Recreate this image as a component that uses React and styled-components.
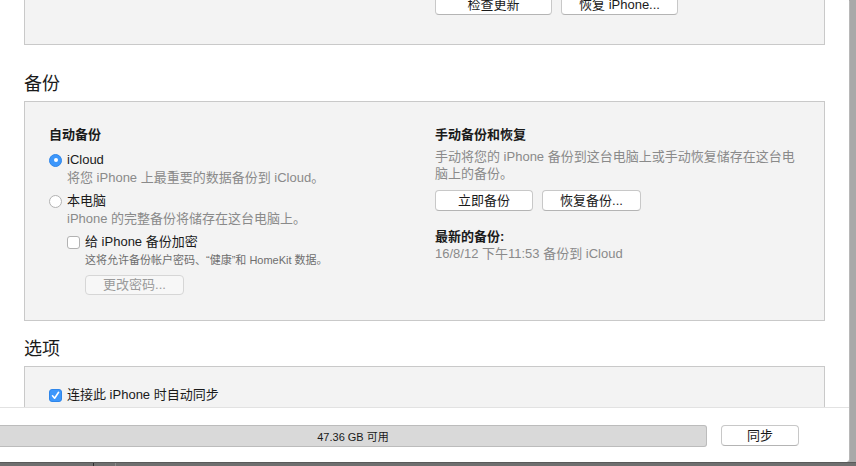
import React from 'react'
import styled, { createGlobalStyle } from 'styled-components'

const Global = createGlobalStyle`
  html, body { margin: 0; padding: 0; }
  body {
    width: 856px;
    height: 466px;
    overflow: hidden;
    background: linear-gradient(90deg, #c4c4c4 0px, #a9a9a9 7px);
    font-family: "Liberation Sans", "Noto Sans CJK SC", sans-serif;
    color: #1d1d1d;
    -webkit-font-smoothing: antialiased;
  }
`

export default function App() {
  return (
    <Page>
      <Global />
      <Window>
        <Scroll>
          <Inner>
            <Panel $top>
              <span />
              <ButtonRow>
                <Button $w={117}>检查更新</Button>
                <Button $w={117}>恢复 iPhone...</Button>
              </ButtonRow>
            </Panel>

            <Heading $gap={28}>备份</Heading>
            <Panel>
              <Column>
                <Title>自动备份</Title>
                <OptionRow $mt={8}>
                  <Radio $on />
                  <Label>iCloud</Label>
                </OptionRow>
                <Desc>将您 iPhone 上最重要的数据备份到 iCloud。</Desc>
                <OptionRow $mt={6}>
                  <Radio />
                  <Label>本电脑</Label>
                </OptionRow>
                <Desc>iPhone 的完整备份将储存在这台电脑上。</Desc>
                <Nested>
                  <OptionRow $mt={6}>
                    <Check />
                    <Label>给 iPhone 备份加密</Label>
                  </OptionRow>
                  <Small>这将允许备份帐户密码、“健康”和 HomeKit 数据。</Small>
                  <Button $w={99} $h={20} $ml={18} $mt={7} disabled>更改密码...</Button>
                </Nested>
              </Column>
              <Column>
                <Title>手动备份和恢复</Title>
                <Desc $mt={5}>手动将您的 iPhone 备份到这台电脑上或手动恢复储存在这台电脑上的备份。</Desc>
                <ButtonRow $mt={8}>
                  <Button $w={98}>立即备份</Button>
                  <Button $w={99}>恢复备份...</Button>
                </ButtonRow>
                <Title $mt={17}>最新的备份:</Title>
                <Desc>16/8/12 下午11:53 备份到 iCloud</Desc>
              </Column>
            </Panel>

            <Heading $gap={17}>选项</Heading>
            <Panel $open>
              <OptionRow>
                <Check $on>
                  <svg width="9" height="9" viewBox="0 0 9 9">
                    <path d="M1.5 4.8 L3.6 7.2 L7.6 1.3" fill="none" stroke="#fff" strokeWidth="1.6" strokeLinecap="round" strokeLinejoin="round" />
                  </svg>
                </Check>
                <Label>连接此 iPhone 时自动同步</Label>
              </OptionRow>
            </Panel>
          </Inner>
        </Scroll>
        <Footer>
          <Storage>47.36 GB 可用</Storage>
          <Button $w={78}>同步</Button>
        </Footer>
      </Window>
      <Strip>
        <Divider $at={93} $c="#2e2e2e" />
        <Divider $at={21} $c="#8c8c8c" />
      </Strip>
    </Page>
  )
}

const Page = styled.div`
  display: flex;
  flex-direction: column;
  width: 856px;
  height: 466px;
`

const Window = styled.div`
  width: 849px;
  height: 462px;
  background: #fff;
  display: flex;
  flex-direction: column;
  box-shadow: 1px 1px 0 #b8b8b8;
  border-bottom-right-radius: 4px;
  overflow: hidden;
`

const Scroll = styled.div`
  flex: 1;
  overflow: hidden;
`

const Inner = styled.div`
  margin-top: -40px;
  padding: 0 24px 0 24px;
  width: 801px;
`

const Panel = styled.div`
  box-sizing: border-box;
  background: #f3f3f3;
  border: 1px solid #c9c9c9;
  display: grid;
  grid-template-columns: 386px 1fr;
  padding: ${p => (p.$top ? '0 24px 29px' : p.$open ? '19px 24px 40px' : '24px 24px 25px')};
  ${p => p.$top && 'height: 85px; align-items: end;'}
  ${p => p.$open && 'display: block;'}
`

const Heading = styled.h2`
  margin: ${p => p.$gap}px 0 10px;
  font-family: "Noto Sans CJK SC", sans-serif;
  font-weight: 400;
  font-size: 18px;
  line-height: 18px;
  color: #1a1a1a;
`

const Column = styled.div`
  display: flex;
  flex-direction: column;
  align-items: flex-start;
`

const Title = styled.div`
  margin-top: ${p => p.$mt || 0}px;
  font-size: 13px;
  font-weight: 700;
  line-height: 17px;
  color: #1a1a1a;
`

const OptionRow = styled.div`
  display: flex;
  align-items: center;
  gap: 5px;
  height: 18px;
  margin-top: ${p => p.$mt || 0}px;
`

const Label = styled.span`
  font-size: 13px;
  line-height: 18px;
  color: #1a1a1a;
`

const Desc = styled.div`
  margin-top: ${p => p.$mt || 0}px;
  font-size: 13px;
  line-height: 17px;
  color: #8a8a8a;
  max-width: 365px;
  ${Column}:first-child & { padding-left: 18px; }
`

const Nested = styled.div`
  padding-left: 18px;
  display: flex;
  flex-direction: column;
  align-items: flex-start;
`

const Small = styled.div`
  padding-left: 18px;
  font-size: 11px;
  line-height: 15px;
  margin-top: 2px;
  color: #6e6e6e;
`

const Radio = styled.span`
  box-sizing: border-box;
  width: 13px;
  height: 13px;
  border-radius: 50%;
  flex: none;
  background: ${p => (p.$on ? '#3d97fb' : '#fff')};
  border: 1px solid ${p => (p.$on ? '#2f86ea' : '#b2b2b2')};
  display: flex;
  align-items: center;
  justify-content: center;
  &::after {
    content: '';
    width: 4px;
    height: 4px;
    border-radius: 50%;
    background: #fff;
    display: ${p => (p.$on ? 'block' : 'none')};
  }
`

const Check = styled.span`
  box-sizing: border-box;
  width: 13px;
  height: 13px;
  border-radius: 3px;
  flex: none;
  background: ${p => (p.$on ? '#3d97fb' : '#fff')};
  border: 1px solid ${p => (p.$on ? '#2f86ea' : '#b2b2b2')};
  display: flex;
  align-items: center;
  justify-content: center;
`

const ButtonRow = styled.div`
  display: flex;
  gap: 9px;
  margin-top: ${p => p.$mt || 0}px;
`

const Button = styled.button`
  box-sizing: border-box;
  width: ${p => p.$w}px;
  height: ${p => p.$h || 21}px;
  margin: ${p => p.$mt || 0}px 0 0 ${p => p.$ml || 0}px;
  padding: 0;
  background: ${p => (p.disabled ? '#f7f7f7' : '#fff')};
  border: 1px solid #c8c8c8;
  border-bottom-color: #b4b4b4;
  border-radius: 4px;
  font-family: "Liberation Sans", "Noto Sans CJK SC", sans-serif;
  font-size: 13px;
  line-height: 18px;
  color: ${p => (p.disabled ? '#9a9a9a' : '#1a1a1a')};
  ${p => p.disabled && 'border-color: #d6d6d6;'}
`

const Footer = styled.div`
  box-sizing: border-box;
  height: 55px;
  flex: none;
  border-top: 1px solid #e2e2e2;
  display: flex;
  align-items: flex-start;
  gap: 14px;
  padding-top: 17px;
  background: #fff;
`

const Storage = styled.div`
  box-sizing: border-box;
  width: 707px;
  height: 22px;
  background: #d9d9d9;
  border: 1px solid #bcbcbc;
  border-left: none;
  border-radius: 0 3px 3px 0;
  display: flex;
  align-items: center;
  justify-content: center;
  font-size: 11px;
  color: #1a1a1a;
`

const Strip = styled.div`
  flex: 1;
  display: flex;
  background: #6f6f6f;
  border-top: 1px solid #5a5a5a;
`

const Divider = styled.span`
  margin-left: ${p => p.$at}px;
  width: 1px;
  background: ${p => p.$c};
`
